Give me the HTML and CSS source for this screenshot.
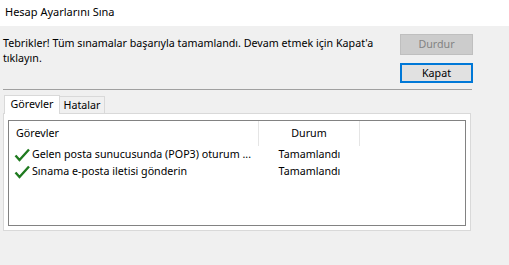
FILE: index.html
```html
<!DOCTYPE html>
<html lang="tr">
<head>
<meta charset="utf-8">
<link rel="stylesheet" href="styles.css">
</head>
<body>
<div class="titlebar">Hesap Ayarlarını Sına</div>
<div class="dialog">
  <div class="top">
    <div class="message">Tebrikler! Tüm sınamalar başarıyla tamamlandı. Devam etmek için Kapat'a tıklayın.</div>
    <div class="buttons">
      <div class="btn disabled">Durdur</div>
      <div class="btn default">Kapat</div>
    </div>
  </div>
  <div class="separator"></div>
  <div class="tabs">
    <div class="tab active">Görevler</div>
    <div class="tab">Hatalar</div>
  </div>
  <div class="pane">
    <div class="listview">
      <div class="header">
        <div class="col c1">Görevler</div>
        <div class="col c2">Durum</div>
        <div class="col c3"></div>
      </div>
      <div class="row">
        <div class="cell c1"><svg class="check" viewBox="0 0 16 16" width="16" height="16"><path d="M1.5 8.5 L5.5 13 L15 2.5" fill="none" stroke="#1f7a1f" stroke-width="2.4" stroke-linejoin="miter" stroke-linecap="butt"/></svg><span>Gelen posta sunucusunda (POP3) oturum ...</span></div>
        <div class="cell c2">Tamamlandı</div>
      </div>
      <div class="row">
        <div class="cell c1"><svg class="check" viewBox="0 0 16 16" width="16" height="16"><path d="M1.5 8.5 L5.5 13 L15 2.5" fill="none" stroke="#1f7a1f" stroke-width="2.4" stroke-linejoin="miter" stroke-linecap="butt"/></svg><span>Sınama e-posta iletisi gönderin</span></div>
        <div class="cell c2">Tamamlandı</div>
      </div>
    </div>
  </div>
</div>
</body>
</html>
```
FILE: styles.css
```css
* { box-sizing: border-box; }
html, body { margin: 0; padding: 0; }
body {
  background: #f0f0f0;
  font-family: "Noto Sans", "Open Sans", sans-serif;
  font-size: 10.7px;
  color: #000;
  width: 509px;
  height: 265px;
  overflow: hidden;
}
.titlebar {
  height: 26px;
  background: #fff;
  padding-left: 5px;
  line-height: 24px;
  font-size: 11px;
}
.dialog {
  padding: 8px 0 0 3px;
  width: 473px;
}
.top {
  display: flex;
  justify-content: space-between;
}
.message {
  width: 385px;
  margin-top: 2px;
  line-height: 15px;
}
.buttons {
  display: flex;
  flex-direction: column;
  gap: 8px;
  width: 73px;
}
.btn {
  height: 21px;
  line-height: 19px;
  text-align: center;
  border: 1px solid #adadad;
  background: #e1e1e1;
}
.btn.disabled {
  background: #cccccc;
  border-color: #bfbfbf;
  color: #838383;
}
.btn.default {
  height: 20px;
  line-height: 16px;
  border: 2px solid #0078d7;
}
.separator {
  margin-top: 6px;
  height: 1px;
  background: #a0a0a0;
  width: 469px;
}
.tabs {
  display: flex;
  margin-top: 5px;
  padding-left: 2px;
  height: 18px;
  align-items: flex-end;
  position: relative;
  z-index: 1;
}
.tab {
  height: 17px;
  line-height: 16px;
  border: 1px solid #d9d9d9;
  border-bottom: none;
  background: #f0f0f0;
  margin-left: -1px;
  width: 46px;
  text-align: center;
}
.tab.active {
  height: 19px;
  background: #fff;
  margin-bottom: -1px;
  line-height: 17px;
  width: 56px;
}
.pane {
  width: 468px;
  height: 118px;
  background: #fff;
  border: 1px solid #d9d9d9;
  padding: 6px 4px 4px 4px;
}
.listview {
  height: 106px;
  border: 1px solid #828282;
  background: #fff;
}
.header {
  display: flex;
  height: 25px;
}
.col {
  line-height: 24px;
  border-right: 1px solid #e5e5e5;
}
.col.c1 { width: 250px; padding-left: 7px; }
.col.c2 { width: 101px; text-align: center; }
.col.c3 { border-right: none; }
.row {
  display: flex;
  height: 17px;
  line-height: 17px;
}
.cell.c1 {
  width: 250px;
  padding-left: 5px;
  display: flex;
  align-items: center;
  gap: 2px;
  white-space: nowrap;
}
.cell.c2 { width: 101px; text-align: center; }
.check { flex: none; }
```
